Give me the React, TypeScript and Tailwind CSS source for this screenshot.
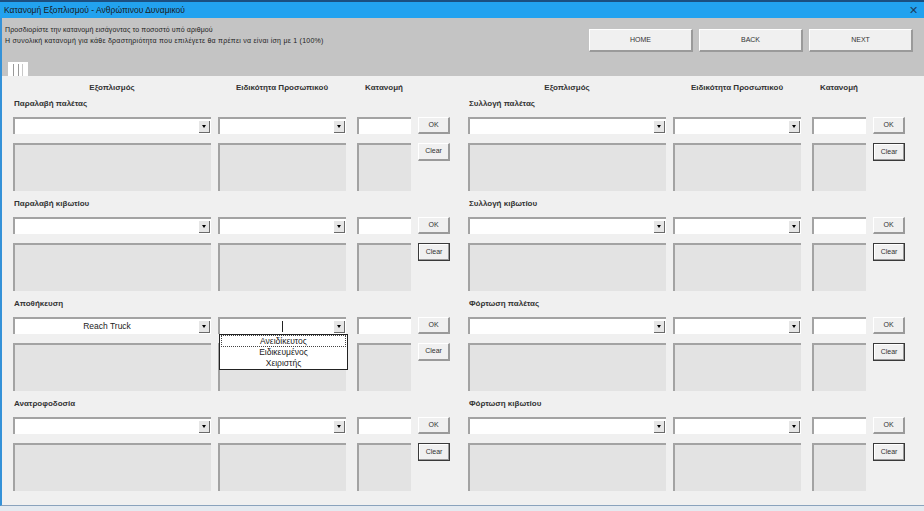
import React from "react";

type Section = { label: string; darkClear: boolean; equip?: string; openList?: boolean };

const leftSections: Section[] = [
  { label: "Παραλαβή παλέτας", darkClear: false },
  { label: "Παραλαβή κιβωτίου", darkClear: true },
  { label: "Αποθήκευση", darkClear: false, equip: "Reach Truck", openList: true },
  { label: "Ανατροφοδοσία", darkClear: true },
];

const rightSections: Section[] = [
  { label: "Συλλογή παλέτας", darkClear: true },
  { label: "Συλλογή κιβωτίου", darkClear: true },
  { label: "Φόρτωση παλέτας", darkClear: true },
  { label: "Φόρτωση κιβωτίου", darkClear: true },
];

function WinButton({ children, dark, className = "" }: { children: React.ReactNode; dark?: boolean; className?: string }) {
  return (
    <div
      className={`flex items-center justify-center bg-[#f0f0f0] text-[7px] text-[#333] ${
        dark
          ? "border border-[#3a3a3a] shadow-[inset_-1px_-1px_0_#9a9a9a,inset_1px_1px_0_#ffffff]"
          : "border-t border-l border-t-white border-l-white border-r-2 border-b-2 border-r-[#9a9a9a] border-b-[#9a9a9a]"
      } ${className}`}
    >
      {children}
    </div>
  );
}

function Combo({ value, cursor, open, width }: { value?: string; cursor?: boolean; open?: boolean; width: string }) {
  return (
    <div className={`relative flex h-[17px] shrink-0 items-center border-t-2 border-l-2 border-t-[#a3a3a3] border-l-[#a3a3a3] bg-white ${width}`}>
      <div className="flex flex-1 items-center justify-center text-[8.5px] text-[#222]">
        {value}
        {cursor && <div className="ml-[10px] h-[11px] w-px bg-[#222]" />}
      </div>
      <div className="mr-px flex h-[12px] w-[11px] items-center justify-center border-r border-b border-r-[#6a6a6a] border-b-[#6a6a6a] bg-[#e6e6e6]">
        <div className="h-0 w-0 border-x-[2.5px] border-t-[3px] border-x-transparent border-t-black" />
      </div>
      {open && (
        <div className="absolute top-[15px] left-[-1px] z-10 w-[129px] border border-[#222] bg-white text-center text-[8.5px] leading-[11px] text-[#222]">
          <div className="mx-px border border-dotted border-[#444] leading-[10px]">Ανειδίκευτος</div>
          <div>Ειδικευμένος</div>
          <div>Χειριστής</div>
        </div>
      )}
    </div>
  );
}

function Panel({ sections }: { sections: Section[] }) {
  return (
    <div className="flex w-[437px] shrink-0 flex-col">
      <div className="flex h-[12px] items-center text-[8px] font-bold text-[#333]">
        <div className="w-[198px] text-center">Εξοπλισμός</div>
        <div className="ml-[7px] w-[128px] text-center">Ειδικότητα Προσωπικού</div>
        <div className="ml-[11px] w-[54px] text-center">Κατανομή</div>
      </div>
      <div className="mt-[3px] flex flex-col">
        {sections.map((s) => (
          <div key={s.label} className="flex h-[100px] flex-col">
            <div className="h-[14px] pl-px text-[8px] leading-[14px] font-bold text-[#333]">{s.label}</div>
            <div className="mt-[6px] flex">
              <Combo width="w-[198px]" value={s.equip} />
              <div className="ml-[7px]">
                <Combo width="w-[128px]" cursor={s.openList} open={s.openList} />
              </div>
              <div className="ml-[11px] h-[17px] w-[54px] border-t-2 border-l-2 border-t-[#a3a3a3] border-l-[#a3a3a3] bg-white" />
              <WinButton className="ml-[7px] h-[17px] w-[32px]">OK</WinButton>
            </div>
            <div className="mt-[9px] flex">
              <div className="h-[48px] w-[198px] border-t-2 border-l-2 border-t-[#a3a3a3] border-l-[#a3a3a3] bg-[#e3e3e3]" />
              <div className="ml-[7px] h-[48px] w-[128px] border-t-2 border-l-2 border-t-[#a3a3a3] border-l-[#a3a3a3] bg-[#e3e3e3]" />
              <div className="ml-[11px] h-[48px] w-[54px] border-t-2 border-l-2 border-t-[#a3a3a3] border-l-[#a3a3a3] bg-[#e3e3e3]" />
              <WinButton dark={s.darkClear} className="ml-[7px] h-[18px] w-[32px]">
                Clear
              </WinButton>
            </div>
          </div>
        ))}
      </div>
    </div>
  );
}

export default function App() {
  return (
    <div className="flex h-[511px] w-[924px] flex-col overflow-hidden bg-[#f0f0f0] font-['Liberation_Sans',Arial,sans-serif]">
      {/* title bar */}
      <div className="flex h-[18px] shrink-0 items-center justify-between border-t-2 border-t-[#1b4f80] bg-[#22a2ef] pr-[6px] pl-[4px]">
        <span className="text-[8.5px] text-[#1a1a1a]">Κατανομή Εξοπλισμού - Ανθρώπινου Δυναμικού</span>
        <span className="text-[11px] leading-none text-[#1d3d5c]">✕</span>
      </div>

      <div className="flex flex-1 flex-col border-l-2 border-l-[#3592d8] border-b border-b-[#8aa3bd]">
        {/* header */}
        <div className="relative flex h-[58px] shrink-0 bg-[#c4c4c4] pr-[11px] pl-[3px]">
          <div className="pt-[6px] text-[7px] leading-[11px] tracking-[0.1px] text-[#222]">
            <div>Προσδιορίστε την κατανομή εισάγοντας το ποσοστό υπό αριθμού</div>
            <div className="tracking-[0.25px]">Η συνολική κατανομή για κάθε δραστηριότητα που επιλέγετε θα πρέπει να είναι ίση με 1 (100%)</div>
          </div>
          <div className="ml-auto flex gap-[6px] pt-[11px]">
            <WinButton className="h-[23px] w-[104px] text-[7.5px]">HOME</WinButton>
            <WinButton className="h-[23px] w-[104px] text-[7.5px]">BACK</WinButton>
            <WinButton className="h-[23px] w-[104px] text-[7.5px]">NEXT</WinButton>
          </div>
          <div className="absolute bottom-0 left-[6px] flex h-[14px] w-[20px] items-stretch gap-[4px] bg-white px-[5px] pt-[2px]">
            <div className="w-px bg-[#9a9a9a]" />
            <div className="w-px bg-[#9a9a9a]" />
            <div className="w-px bg-[#c8c8c8]" />
          </div>
        </div>

        {/* body */}
        <div className="flex flex-1 gap-[18px] pt-[6px] pl-[11px]">
          <Panel sections={leftSections} />
          <Panel sections={rightSections} />
        </div>
      </div>
      <div className="h-[5px] shrink-0 bg-[#e4eaf0]" />
    </div>
  );
}
